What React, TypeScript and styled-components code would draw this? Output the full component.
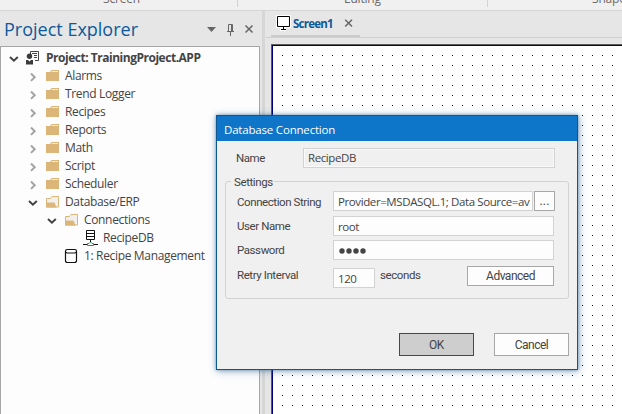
import React from "react";
import styled, { createGlobalStyle } from "styled-components";

const GlobalStyle = createGlobalStyle`
  * { box-sizing: border-box; }
  body { margin: 0; overflow: hidden; }
`;

const Window = styled.div`
  position: relative;
  width: 622px;
  height: 414px;
  overflow: hidden;
  display: flex;
  flex-direction: column;
  background: #e6e6e6;
  color: #444;
  font: 12px/18px "Open Sans", "Noto Sans", sans-serif;
  white-space: nowrap;
`;

/* ---------- ribbon ---------- */
const Ribbon = styled.div`
  flex: none;
  display: flex;
  height: 11px;
  overflow: hidden;
  background: #f0f0f0;
  border-bottom: 1px solid #d5d5d5;
`;
const RibbonGroup = styled.div<{ $width: number; $indent: number; $last?: boolean }>`
  flex: none;
  width: ${(p) => p.$width}px;
  height: 7px;
  padding-left: ${(p) => p.$indent}px;
  border-right: ${(p) => (p.$last ? "none" : "1px solid #d2d2d2")};
  color: #6a6a6a;
  line-height: 18px;
  letter-spacing: -0.2px;
`;
const RibbonLabel = styled.span`
  display: block;
  margin-top: -10px;
`;

/* ---------- project explorer ---------- */
const Body = styled.div`
  flex: 1;
  min-height: 0;
  display: flex;
`;
const Explorer = styled.div`
  flex: none;
  width: 260px;
  display: flex;
  flex-direction: column;
`;
const ExplorerHeader = styled.div`
  flex: none;
  height: 35px;
  display: flex;
  align-items: center;
  padding-left: 4px;
`;
const ExplorerTitle = styled.h1`
  margin: 0;
  width: 202px;
  color: #0c5a9b;
  font-size: 18px;
  font-weight: 400;
  line-height: 34px;
`;
const Tools = styled.div`
  display: flex;
  align-items: center;
`;
const Tree = styled.div`
  flex: 1;
  padding: 2px 0 0 8px;
  background: #fdfdfd;
  border: solid #a6a6a6;
  border-width: 1px 1px 0 1px;
`;
const TreeRow = styled.div<{ $level: number; $bold?: boolean }>`
  display: flex;
  align-items: center;
  height: 18px;
  padding-left: ${(p) => p.$level * 19}px;
  font-weight: ${(p) => (p.$bold ? 700 : 400)};
  letter-spacing: ${(p) => (p.$bold ? "-0.48px" : "-0.34px")};
`;
const ArrowSlot = styled.span`
  flex: none;
  display: flex;
  width: 16px;
  height: 18px;
`;
const IconSlot = styled.span`
  flex: none;
  display: flex;
  width: 21px;
  height: 18px;
`;
const Splitter = styled.div`
  flex: none;
  width: 3px;
  margin: 0 1px 0 2px;
  background: #d6d6d6;
`;

/* ---------- screen editor ---------- */
const Editor = styled.div`
  flex: 1;
  min-width: 0;
  display: flex;
  flex-direction: column;
`;
const TabStrip = styled.div`
  flex: none;
  height: 27px;
  padding-left: 5px;
  border-bottom: 1px solid #d0d0d0;
`;
const Tab = styled.div`
  width: 89px;
  height: 26px;
  display: flex;
  align-items: center;
  border-bottom: 2px solid #cbcbcb;
`;
const TabLabel = styled.span`
  width: 50px;
  margin: 2px 0 0 2px;
  color: #0c5a9b;
  font-weight: 700;
  font-size: 11.5px;
  letter-spacing: -0.76px;
`;
const Canvas = styled.div`
  flex: 1;
  margin: 6px 0 0 5px;
  border: solid #5b5b5b;
  border-width: 1px 0 0 1px;
`;
const Grid = styled.div`
  height: 100%;
  border: solid #00007a;
  border-width: 1px 0 0 1px;
  background: #fff;
`;

/* ---------- dialog ---------- */
const Dialog = styled.div`
  position: absolute;
  left: 216px;
  top: 115px;
  width: 362px;
  height: 255px;
  display: flex;
  flex-direction: column;
  background: #f0f0f0;
  border: 1px solid #0d5794;
  box-shadow: 0 0 3px rgba(24, 85, 140, 0.5), 1px 1px 8px rgba(24, 85, 140, 0.45);
`;
const TitleBar = styled.div`
  flex: none;
  height: 25px;
  padding-left: 7px;
  background: #0f75c8;
  color: #fff;
  font-size: 11.5px;
  line-height: 28px;
  letter-spacing: -0.19px;
`;
const NameRow = styled.div`
  display: flex;
  align-items: center;
  height: 20px;
  margin: 7px 0 0 19px;
`;
const Label = styled.label<{ $drop?: boolean }>`
  flex: none;
  width: 96px;
  padding-top: ${(p) => (p.$drop ? 2 : 0)}px;
  font-family: Roboto, "Liberation Sans", sans-serif;
  font-size: 11.5px;
  letter-spacing: -0.42px;
`;
const NameLabel = styled(Label)`
  width: 67px;
`;
const Field = styled.div<{ $width: number; $readOnly?: boolean }>`
  flex: none;
  width: ${(p) => p.$width}px;
  height: 20px;
  padding: ${(p) => (p.$readOnly ? 0 : 1)}px 3px 0 4px;
  overflow: hidden;
  background: ${(p) => (p.$readOnly ? "#f0f0f0" : "#fdfdfd")};
  border: 1px solid #d2d2d2;
  box-shadow: ${(p) => (p.$readOnly ? "inset 0 0 0 1px #fafafa" : "none")};
  font-size: 11.5px;
  line-height: 17px;
  letter-spacing: -0.4px;
`;
const Settings = styled.fieldset`
  position: relative;
  width: 344px;
  height: 118px;
  margin: 13px 0 0 8px;
  padding: 9px 0 0 11px;
  border: 1px solid #d2d2d2;
  border-radius: 3px;
`;
const Legend = styled.span`
  position: absolute;
  left: 5px;
  top: -9px;
  width: 43px;
  padding-left: 3px;
  background: #f0f0f0;
  font-family: Roboto, "Liberation Sans", sans-serif;
  font-size: 11.5px;
  letter-spacing: -0.4px;
`;
const FormRow = styled.div<{ $gap?: number }>`
  display: flex;
  align-items: center;
  height: 20px;
  margin-bottom: ${(p) => p.$gap ?? 4}px;
`;
const RetryRow = styled(FormRow)`
  align-items: flex-start;
`;
const RetryValue = styled.div`
  padding-top: 2px;
`;
const Unit = styled.span`
  width: 87px;
  margin-left: 5px;
  font-family: Roboto, "Liberation Sans", sans-serif;
  font-size: 11.5px;
  letter-spacing: -0.4px;
`;
const Button = styled.button<{ $width: number; $height: number; $primary?: boolean }>`
  flex: none;
  width: ${(p) => p.$width}px;
  height: ${(p) => p.$height}px;
  padding: 0;
  color: #444;
  background: ${(p) => (p.$primary ? "#cecece" : "#fdfdfd")};
  border: 1px solid ${(p) => (p.$primary ? "#0d5794" : "#a8a8a8")};
  font: 12px/16px Roboto, "Liberation Sans", sans-serif;
  letter-spacing: -0.5px;
`;
const BrowseButton = styled(Button)`
  margin-left: 1px;
  letter-spacing: 0.2px;
`;
const Footer = styled.div`
  display: flex;
  justify-content: flex-end;
  gap: 20px;
  margin: 34px 8px 0 0;
`;
const Glyph = styled.svg`
  display: block;
  flex: none;
`;

const Chevron = ({ open }: { open?: boolean }) => (
  <Glyph width="16" height="18" fill="none" strokeWidth="2">
    {open ? (
      <path d="M1 8 L4.9 11.7 L8.8 8" stroke="#444" />
    ) : (
      <path d="M3 6.5 L6.7 10.2 L3 13.9" stroke="#a3a3a3" />
    )}
  </Glyph>
);

const Folder = () => (
  <Glyph width="21" height="18">
    <path d="M2 5H6L7.4 3H15V14H2Z" fill="#dcb678" />
    <path d="M7.5 4.5H14" stroke="#f8ecd6" />
  </Glyph>
);

const OpenFolder = () => (
  <Glyph width="21" height="18">
    <path d="M2.5 14V5.5H6.5L8 3.5H14.5V14Z" fill="#f2f0ef" stroke="#dcb678" />
    <path d="M2 14.5V9.5H10.5L12.5 14.5Z" fill="#dcb678" />
  </Glyph>
);

const ProjectGlyph = () => (
  <Glyph width="21" height="18">
    <path d="M5.5 5V2.5H13.5V11.5H10" fill="none" stroke="#444" />
    <path d="M7 4.5H12M9 6.5H12M9 8.5H12" stroke="#444" />
    <circle cx="4.5" cy="7.2" r="2.7" fill="#3a3a3a" />
    <path d="M1 15.5V11H3L4.5 12.5L6 11H8V15.5Z" fill="#3a3a3a" />
  </Glyph>
);

const ServerGlyph = () => (
  <Glyph width="21" height="18">
    <path d="M4.5 1.5H12.5V10.5H4.5ZM4.5 4.5H12.5M4.5 7.5H12.5" fill="#fff" stroke="#111" />
    <path d="M8.5 11V13M1 15.5H5M12 15.5H16" stroke="#111" />
    <path d="M5.5 16.5V14.5H7L8.5 13L10 14.5H11.5V16.5Z" fill="#fff" stroke="#13a04a" />
  </Glyph>
);

const DatabaseGlyph = () => (
  <Glyph width="21" height="18" fill="#fff" stroke="#111">
    <path d="M2.5 4.5V13.5Q2.5 15.5 4.5 15.5H11.5Q13.5 15.5 13.5 13.5V4.5" strokeWidth="1.2" />
    <rect x="2.5" y="2.5" width="11" height="3.5" rx="1.7" strokeWidth="1.2" />
  </Glyph>
);

const folders = ["Alarms", "Trend Logger", "Recipes", "Reports", "Math", "Script", "Scheduler"];

const Dots = () => (
  <Glyph width="349" height="368">
    <defs>
      <pattern id="dots" width="10" height="10" x="9" y="9" patternUnits="userSpaceOnUse">
        <rect width="1" height="1" fill="#00006e" />
      </pattern>
    </defs>
    <rect width="349" height="368" fill="url(#dots)" />
  </Glyph>
);

export default function App() {
  return (
    <Window>
      <GlobalStyle />
      <Ribbon>
        <RibbonGroup $width={238} $indent={103}><RibbonLabel>Screen</RibbonLabel></RibbonGroup>
        <RibbonGroup $width={250} $indent={106}><RibbonLabel>Editing</RibbonLabel></RibbonGroup>
        <RibbonGroup $width={134} $indent={104} $last><RibbonLabel>Shapes</RibbonLabel></RibbonGroup>
      </Ribbon>
      <Body>
        <Explorer>
          <ExplorerHeader>
            <ExplorerTitle>Project Explorer</ExplorerTitle>
            <Tools>
              <Glyph width="50" height="18">
                <path d="M1 7H10L5.5 12Z" fill="#666" />
                <path d="M22.5 11V4.5H26.5V11M21 11.5H28M24.5 12V16M25.5 5V11" fill="none" stroke="#666" />
                <path d="M39.5 5.5L46.5 12.5M46.5 5.5L39.5 12.5" stroke="#666" strokeWidth="1.5" />
              </Glyph>
            </Tools>
          </ExplorerHeader>
          <Tree>
            <TreeRow $level={0} $bold>
              <ArrowSlot><Chevron open /></ArrowSlot>
              <IconSlot><ProjectGlyph /></IconSlot>
              Project: TrainingProject.APP
            </TreeRow>
            {folders.map((name) => (
              <TreeRow key={name} $level={1}>
                <ArrowSlot><Chevron /></ArrowSlot>
                <IconSlot><Folder /></IconSlot>
                {name}
              </TreeRow>
            ))}
            <TreeRow $level={1}>
              <ArrowSlot><Chevron open /></ArrowSlot>
              <IconSlot><OpenFolder /></IconSlot>
              Database/ERP
            </TreeRow>
            <TreeRow $level={2}>
              <ArrowSlot><Chevron open /></ArrowSlot>
              <IconSlot><OpenFolder /></IconSlot>
              Connections
            </TreeRow>
            <TreeRow $level={3}>
              <ArrowSlot />
              <IconSlot><ServerGlyph /></IconSlot>
              RecipeDB
            </TreeRow>
            <TreeRow $level={2}>
              <ArrowSlot />
              <IconSlot><DatabaseGlyph /></IconSlot>
              1: Recipe Management
            </TreeRow>
          </Tree>
        </Explorer>
        <Splitter />
        <Editor>
          <TabStrip>
            <Tab>
              <Glyph width="20" height="20">
                <rect x="6.5" y="3.5" width="12" height="10" fill="none" stroke="#fff" strokeWidth="3" />
                <path d="M9 16H15" stroke="#fff" strokeWidth="4" />
                <path d="M6.5 3.5H18.5V13.5H6.5Z" fill="#fff" stroke="#000" />
                <path d="M12.5 14V17M10 16.5H15" stroke="#000" />
              </Glyph>
              <TabLabel>Screen1</TabLabel>
              <Glyph width="12" height="14">
                <path d="M2.2 3.7L9 10.5M9 3.7L2.2 10.5" stroke="#666" strokeWidth="1.5" />
              </Glyph>
            </Tab>
          </TabStrip>
          <Canvas><Grid><Dots /></Grid></Canvas>
        </Editor>
      </Body>

      <Dialog role="dialog">
        <TitleBar>Database Connection</TitleBar>
        <NameRow>
          <NameLabel>Name</NameLabel>
          <Field $width={252} $readOnly>RecipeDB</Field>
        </NameRow>
        <Settings>
          <Legend>Settings</Legend>
          <FormRow $gap={5}>
            <Label $drop>Connection String</Label>
            <Field $width={200}>Provider=MSDASQL.1; Data Source=av</Field>
            <BrowseButton $width={21} $height={20}>...</BrowseButton>
          </FormRow>
          <FormRow>
            <Label>User Name</Label>
            <Field $width={221}>root</Field>
          </FormRow>
          <FormRow $gap={6}>
            <Label>Password</Label>
            <Field $width={221}>
              <Glyph width="30" height="18" fill="#444">
                <circle cx="4" cy="9" r="2.7" />
                <circle cx="11" cy="9" r="2.7" />
                <circle cx="18" cy="9" r="2.7" />
                <circle cx="25" cy="9" r="2.7" />
              </Glyph>
            </Field>
          </FormRow>
          <RetryRow>
            <Label>Retry Interval</Label>
            <RetryValue><Field $width={42}>120</Field></RetryValue>
            <Unit>seconds</Unit>
            <Button $width={87} $height={20}>Advanced</Button>
          </RetryRow>
        </Settings>
        <Footer>
          <Button $width={75} $height={23} $primary>OK</Button>
          <Button $width={75} $height={23}>Cancel</Button>
        </Footer>
      </Dialog>
    </Window>
  );
}
